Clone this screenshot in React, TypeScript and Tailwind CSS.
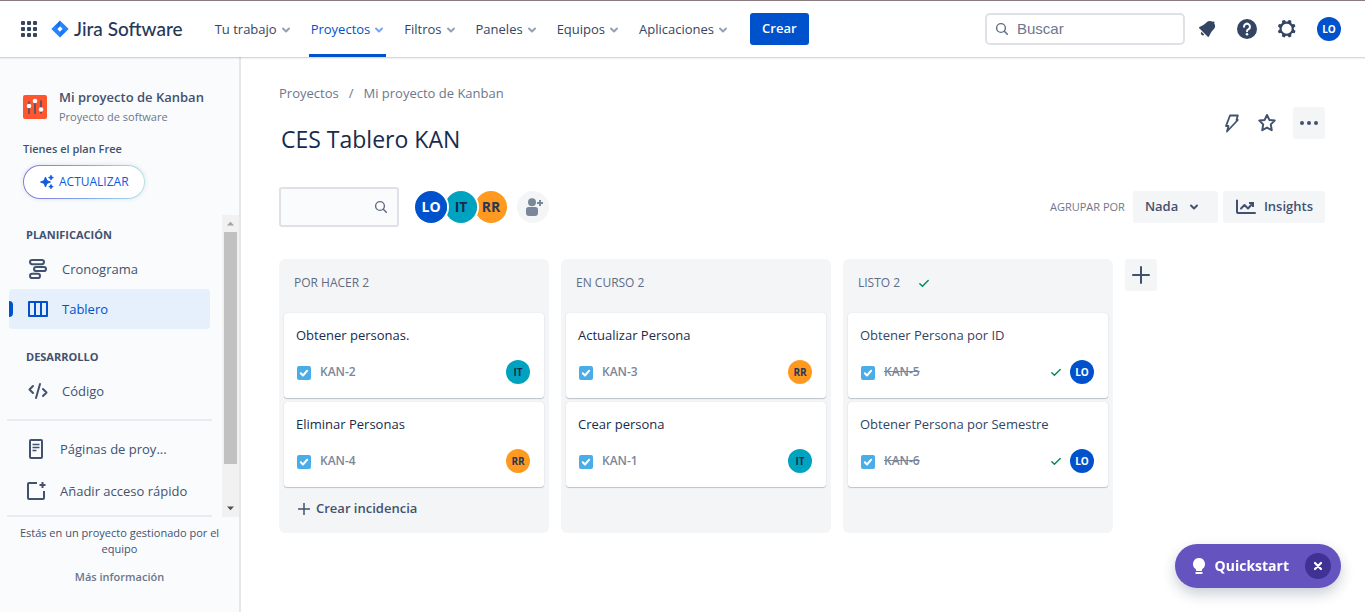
import React from "react";

type IconProps = { className?: string; children: React.ReactNode; viewBox?: string };

function Icon({ className = "size-6", children, viewBox = "0 0 24 24" }: IconProps) {
  return (
    <svg viewBox={viewBox} className={`shrink-0 ${className}`} fill="none" aria-hidden="true">
      {children}
    </svg>
  );
}

function Chevron({ className }: { className: string }) {
  return (
    <Icon viewBox="0 0 10 10" className={`size-[10px] ${className}`}>
      <path d="M2 3.5 5 6.5 8 3.5" stroke="currentColor" strokeWidth="2" strokeLinecap="round" strokeLinejoin="round" />
    </Icon>
  );
}

function SearchIcon() {
  return (
    <Icon viewBox="0 0 14 14" className="size-[14px]">
      <circle cx="6" cy="6" r="4.4" stroke="currentColor" strokeWidth="1.4" />
      <path d="m9.3 9.3 3 3" stroke="currentColor" strokeWidth="1.5" strokeLinecap="round" />
    </Icon>
  );
}

function DoneCheck() {
  return (
    <Icon viewBox="0 0 12 12" className="size-3 text-[#00875a]">
      <path d="M1.8 6.8 4.4 9.2 10.2 3.4" stroke="currentColor" strokeWidth="1.4" strokeLinecap="round" strokeLinejoin="round" />
    </Icon>
  );
}

type Person = "LO" | "IT" | "RR";

const personColors: Record<Person, string> = {
  LO: "bg-[#0052cc] text-white",
  IT: "bg-[#00a3bf] text-[#172b4d]",
  RR: "bg-[#ff991f] text-[#253858]",
};

function Avatar({ who, size }: { who: Person; size: "small" | "large" }) {
  const dims = size === "small" ? "size-6 text-[10px]" : "size-8 text-sm";
  return (
    <span className={`flex shrink-0 items-center justify-center rounded-full font-bold ${dims} ${personColors[who]}`}>
      {who}
    </span>
  );
}

const menus = ["Tu trabajo", "Proyectos", "Filtros", "Paneles", "Equipos", "Aplicaciones"];

function TopBar() {
  return (
    <header className="relative z-10 flex h-[57px] items-center border-t border-[#8b7a80] bg-white pr-6 pl-[21px] text-[#344563] shadow-[0_1px_1px_rgba(9,30,66,0.13),0_2px_1px_rgba(9,30,66,0.04)]">
      <button aria-label="Cambiar de aplicación" className="shrink-0">
        <Icon viewBox="0 0 16 16" className="size-4">
          {[0, 6, 12].map((y) =>
            [0, 6, 12].map((x) => <rect key={`${x}-${y}`} x={x} y={y} width="4" height="4" rx="1" fill="currentColor" />)
          )}
        </Icon>
      </button>
      <a href="#" className="ml-[14px] flex shrink-0 items-center gap-[5px]">
        <Icon viewBox="0 0 18 18" className="size-[18px]">
          <defs>
            <linearGradient id="jira-top" x1="9" y1="5" x2="5" y2="9" gradientUnits="userSpaceOnUse">
              <stop offset="0" stopColor="#0052cc" />
              <stop offset="1" stopColor="#2684ff" />
            </linearGradient>
          </defs>
          <path fillRule="evenodd" d="M9 .4 17.2 8.5q.6.5 0 1L9 17.6.8 9.5q-.6-.5 0-1ZM9 6.3 6.3 9 9 11.7 11.7 9Z" fill="#2684ff" />
          <path d="M9 .4v5.9L6.3 9 3.6 6.1Q6.500 4.500 9 .4Z" fill="url(#jira-top)" opacity=".55" />
          <path d="M9 17.600v-5.900L11.700 9l2.700 2.900Q11.500 13.500 9 17.600Z" fill="#0065e5" opacity=".35" />
        </Icon>
        <span className="font-['Lato',sans-serif] text-[19px] leading-6 font-medium whitespace-nowrap text-[#253858]">Jira Software</span>
      </a>
      <nav className="ml-[30px] flex h-full items-center gap-4">
        {menus.map((label) => {
          const active = label === "Proyectos";
          return (
            <button
              key={label}
              className={`flex h-full items-center gap-1 border-y-[3px] border-t-transparent px-0.5 pt-px font-medium whitespace-nowrap ${
                active ? "border-b-[#0052cc] text-[#0052cc]" : "border-b-transparent"
              }`}
            >
              {label}
              <Chevron className={active ? "text-[#7aa5e6]" : "text-[#97a0af]"} />
            </button>
          );
        })}
      </nav>
      <button className="ml-5 h-8 rounded-[3px] bg-[#0052cc] px-3 font-semibold text-white">Crear</button>
      <div className="ml-auto flex items-center">
        <label className="flex h-8 w-[200px] items-center gap-2 rounded-[5px] border-2 border-[#dfe1e6] px-2 text-[#5e6c84]">
          <SearchIcon />
          <input
            type="search"
            aria-label="Buscar"
            placeholder="Buscar"
            className="w-full min-w-0 bg-transparent font-['Liberation_Sans',sans-serif] text-[15px] outline-none placeholder:text-[#6b778c]"
          />
        </label>
        <button aria-label="Notificaciones" className="ml-[10px]">
          <Icon>
            <path
              fill="currentColor"
              d="M6.485 17.669a2 2 0 002.829 0l-2.829-2.83a2 2 0 000 2.83zm4.897-12.191l-.725.725c-.782.782-2.21 1.813-3.206 2.311l-3.017 1.509c-.495.248-.584.774-.187 1.171l8.556 8.556c.398.396.922.313 1.171-.188l1.51-3.016c.494-.988 1.526-2.42 2.311-3.206l.725-.726a5.048 5.048 0 00.64-6.356 1.01 1.01 0 10-1.354-1.494c-.023.025-.046.049-.066.075a5.043 5.043 0 00-2.788-.84 5.036 5.036 0 00-3.57 1.478z"
            />
          </Icon>
        </button>
        <button aria-label="Ayuda" className="ml-4">
          <Icon>
            <circle cx="12" cy="12" r="10" fill="currentColor" />
            <path d="M9 9.700a3 3 0 1 1 4.600 2.500c-1 .6-1.600 1-1.600 2" stroke="white" strokeWidth="2" strokeLinecap="round" />
            <circle cx="12" cy="17.200" r="1.300" fill="white" />
          </Icon>
        </button>
        <button aria-label="Configuración" className="ml-4">
          <Icon>
            <path
              fill="currentColor"
              d="M11.701 16.7a5.002 5.002 0 110-10.003 5.002 5.002 0 010 10.004m8.368-3.117a1.995 1.995 0 01-1.346-1.885c0-.876.563-1.613 1.345-1.885a.48.48 0 00.315-.574 8.947 8.947 0 00-.836-1.993.477.477 0 00-.598-.195 2.04 2.04 0 01-1.29.08 1.988 1.988 0 01-1.404-1.395 2.04 2.04 0 01.076-1.297.478.478 0 00-.196-.597 8.98 8.98 0 00-1.975-.826.479.479 0 00-.574.314 1.995 1.995 0 01-1.885 1.346 1.994 1.994 0 01-1.884-1.345.482.482 0 00-.575-.315c-.708.2-1.379.485-2.004.842a.47.47 0 00-.198.582A2.002 2.002 0 014.445 7.06a.478.478 0 00-.595.196 8.946 8.946 0 00-.833 1.994.48.48 0 00.308.572 1.995 1.995 0 011.323 1.877c0 .867-.552 1.599-1.324 1.877a.479.479 0 00-.308.57 8.99 8.99 0 00.723 1.79.477.477 0 00.624.194c.595-.273 1.343-.264 2.104.238.117.077.225.185.302.3.527.8.512 1.58.198 2.188a.473.473 0 00.168.628 8.946 8.946 0 002.11.897.474.474 0 00.57-.313 1.995 1.995 0 011.886-1.353c.878 0 1.618.567 1.887 1.353a.475.475 0 00.57.313 8.964 8.964 0 002.084-.883.473.473 0 00.167-.631c-.318-.608-.337-1.393.191-2.195.077-.116.185-.225.302-.302.772-.511 1.527-.513 2.125-.23a.477.477 0 00.628-.19 8.925 8.925 0 00.728-1.793.478.478 0 00-.314-.573"
            />
          </Icon>
        </button>
        <button aria-label="Tu perfil" className="ml-[18px]">
          <Avatar who="LO" size="small" />
        </button>
      </div>
    </header>
  );
}

function SideLink({ label, icon, active = false }: { label: string; icon: React.ReactNode; active?: boolean }) {
  return (
    <a
      href="#"
      className={`relative flex h-10 items-center gap-3 rounded pl-[17px] ${active ? "bg-[#e6effc] text-[#0052cc]" : "text-[#42526e]"}`}
    >
      {active && <span className="absolute top-3 left-0 h-4 w-1 rounded-r-sm bg-[#0052cc]" />}
      {icon}
      <span className="pt-0.5 whitespace-nowrap">{label}</span>
    </a>
  );
}

function Sidebar() {
  return (
    <aside className="flex w-[241px] shrink-0 flex-col border-r-2 border-[#e6e7ea] bg-[#fafbfd] text-[#42526e]">
      <div className="px-[23px] pt-[30px]">
        <div className="flex items-center gap-3">
          <Icon className="size-6">
            <rect width="24" height="24" rx="2" fill="#ff5630" />
            <path d="M6 7v11.500M12 5v13.500M18 6v12" stroke="#42526e" strokeWidth="1.600" strokeLinecap="round" />
            <circle cx="6" cy="11" r="2.300" fill="white" />
            <circle cx="12" cy="6" r="2.300" fill="white" />
            <circle cx="18" cy="14.500" r="2.300" fill="white" />
          </Icon>
          <div className="whitespace-nowrap">
            <h2 className="leading-5 font-semibold">Mi proyecto de Kanban</h2>
            <p className="text-[11px] leading-5 text-[#6b778c]">Proyecto de software</p>
          </div>
        </div>
        <p className="mt-3 text-[11px] leading-5 font-semibold">Tienes el plan Free</p>
        <button className="mt-[6px] rounded-full bg-linear-to-r from-[#8777d9] via-[#7fa6ee] to-[#b3e3e4] p-px shadow-[0_0_5px_rgba(9,30,66,0.12)]">
          <span className="flex h-8 items-center gap-1 rounded-full bg-white px-[15px] text-xs font-medium text-[#0c5be0]">
            <Icon viewBox="0 0 16 16" className="size-4">
              <path
                d="M6.500 3 7.900 6.600 11.500 8 7.900 9.400 6.500 13 5.100 9.400 1.500 8 5.100 6.600ZM12 1.200l.7 1.700 1.700.7-1.700.7-.7 1.700-.7-1.700-1.700-.7 1.700-.7ZM12 10.500l.6 1.500 1.600.6-1.600.7-.6 1.500-.6-1.500-1.600-.7 1.600-.6Z"
                fill="currentColor"
                stroke="currentColor"
                strokeWidth=".9"
                strokeLinejoin="round"
              />
            </Icon>
            ACTUALIZAR
          </span>
        </button>
      </div>
      <div className="mt-4 flex">
        <div className="min-w-0 flex-1 pr-[10px] pl-[7px]">
          <nav className="border-b-2 border-[#e9ebee] pb-1">
            <div className="-mr-0.5 pr-1 pl-0.5">
              <h3 className="pt-[10px] pb-1 pl-[17px] text-[11px] leading-5 font-bold">PLANIFICACIÓN</h3>
              <SideLink
                label="Cronograma"
                icon={
                  <Icon>
                    <rect x="4" y="3" width="14" height="4.200" rx="2.100" stroke="currentColor" strokeWidth="2" />
                    <rect x="8" y="9.900" width="12" height="4.200" rx="2.100" stroke="currentColor" strokeWidth="2" />
                    <rect x="4" y="16.800" width="10" height="4.200" rx="2.100" stroke="currentColor" strokeWidth="2" />
                  </Icon>
                }
              />
              <SideLink
                active
                label="Tablero"
                icon={
                  <Icon>
                    <path d="M3 5h18v14H3ZM9 5v14M15 5v14" stroke="currentColor" strokeWidth="2" strokeLinejoin="round" />
                  </Icon>
                }
              />
              <h3 className="pt-[18px] pb-1 pl-[17px] text-[11px] leading-5 font-bold">DESARROLLO</h3>
              <SideLink
                label="Código"
                icon={
                  <Icon>
                    <path
                      d="m7 7-3.500 3.500L7 14M17 10l3.500 3.500L17 17M14 5l-4 14"
                      stroke="currentColor"
                      strokeWidth="2"
                      strokeLinecap="round"
                      strokeLinejoin="round"
                    />
                  </Icon>
                }
              />
            </div>
            <hr className="my-2 border-t-2 border-[#e9ebee]" />
            <div className="flex flex-col gap-[2px]">
              <SideLink
                label="Páginas de proy..."
                icon={
                  <Icon>
                    <rect x="6" y="3" width="12" height="18" rx="1" stroke="currentColor" strokeWidth="2" />
                    <path d="M8.500 7.500h7M8.500 10.500h7M8.500 13.500h4" stroke="currentColor" strokeWidth="1.600" />
                  </Icon>
                }
              />
              <SideLink
                label="Añadir acceso rápido"
                icon={
                  <Icon>
                    <path d="M13 4H5a1 1 0 0 0-1 1v14a1 1 0 0 0 1 1h14a1 1 0 0 0 1-1v-7" stroke="currentColor" strokeWidth="2" />
                    <path d="M18.500 3v6M15.500 6h6" stroke="currentColor" strokeWidth="2" />
                  </Icon>
                }
              />
            </div>
          </nav>
        </div>
        <div className="flex w-[17px] shrink-0 flex-col items-center justify-between bg-[#f1f1f1]" aria-hidden="true">
          <Icon viewBox="0 0 17 17" className="size-[17px]">
            <path d="M5 10.500h7l-3.500-3.700Z" fill="#a3a3a3" />
          </Icon>
          <span className="w-[13px] flex-1 bg-[#c1c1c1]" />
          <Icon viewBox="0 0 17 17" className="mt-9 size-[17px]">
            <path d="M5 6.500h7l-3.500 3.700Z" fill="#505050" />
          </Icon>
        </div>
      </div>
      <footer className="px-2 pt-2 pb-4 text-center text-[11px] leading-4">
        <p>Estás en un proyecto gestionado por el equipo</p>
        <a href="#" className="mt-3 inline-block font-semibold text-[#6b778c]">Más información</a>
      </footer>
    </aside>
  );
}

type Issue = { title: string; id: string; who: Person };

const columns: { name: string; done?: boolean; create?: boolean; issues: Issue[] }[] = [
  {
    name: "POR HACER",
    create: true,
    issues: [
      { title: "Obtener personas.", id: "KAN-2", who: "IT" },
      { title: "Eliminar Personas", id: "KAN-4", who: "RR" },
    ],
  },
  {
    name: "EN CURSO",
    issues: [
      { title: "Actualizar Persona", id: "KAN-3", who: "RR" },
      { title: "Crear persona", id: "KAN-1", who: "IT" },
    ],
  },
  {
    name: "LISTO",
    done: true,
    issues: [
      { title: "Obtener Persona por ID", id: "KAN-5", who: "LO" },
      { title: "Obtener Persona por Semestre", id: "KAN-6", who: "LO" },
    ],
  },
];

function IssueCard({ issue, done }: { issue: Issue; done?: boolean }) {
  return (
    <article className="rounded-[3px] bg-white px-3 pt-3 pb-[14px] shadow-[0_1px_1px_rgba(9,30,66,0.22),0_0_1px_rgba(9,30,66,0.2)]">
      <h4 className={`leading-5 ${done ? "text-[#344563]" : "text-[#172b4d]"}`}>{issue.title}</h4>
      <div className="mt-[15px] flex items-center gap-2">
        <Icon viewBox="0 0 16 16" className="size-4">
          <rect x="1" y="2" width="14" height="14" rx="2" fill="#4bade8" />
          <path d="m4.800 9.300 2.200 2.200 4.200-4.800" stroke="white" strokeWidth="2" strokeLinecap="round" strokeLinejoin="round" />
        </Icon>
        <a href="#" className={`text-xs leading-6 font-semibold text-[#7a869a] ${done ? "line-through" : ""}`}>
          {issue.id}
        </a>
        <div className="ml-auto mr-0.5 flex items-center gap-2">
          {done && <DoneCheck />}
          <Avatar who={issue.who} size="small" />
        </div>
      </div>
    </article>
  );
}

function Board() {
  return (
    <div className="mt-8 flex items-start gap-3">
      <div className="flex items-stretch gap-3">
        {columns.map((col) => (
          <section key={col.name} className="flex w-[270px] flex-col rounded-md bg-[#f4f5f7] px-[5px]">
            <h3 className="flex h-[54px] items-center gap-[18px] px-[10px] pb-[6px] text-xs font-medium text-[#5e6c84]">
              {col.name} {col.issues.length}
              {col.done && <DoneCheck />}
            </h3>
            <div className="flex flex-col gap-1">
              {col.issues.map((issue) => (
                <IssueCard key={issue.id} issue={issue} done={col.done} />
              ))}
            </div>
            {col.create && (
              <button className="mt-1 mb-[6px] flex h-9 items-center gap-[6px] px-[14px] font-semibold text-[#42526e]">
                <Icon viewBox="0 0 12 12" className="size-3">
                  <path d="M6 0v12M0 6h12" stroke="currentColor" strokeWidth="1.500" />
                </Icon>
                Crear incidencia
              </button>
            )}
          </section>
        ))}
      </div>
      <button aria-label="Crear columna" className="flex size-8 items-center justify-center rounded-[3px] bg-[#f4f5f7] text-[#42526e]">
        <Icon viewBox="0 0 18 18" className="size-[18px]">
          <path d="M9 1v16M1 9h16" stroke="currentColor" strokeWidth="2" strokeLinecap="round" />
        </Icon>
      </button>
    </div>
  );
}

function Toolbar() {
  return (
    <div className="mt-8 flex items-center">
      <label className="flex h-10 w-[120px] items-center rounded-[3px] border-2 border-[#dfe1e6] bg-[#fafbfc] px-[9px] text-[#5e6c84]">
        <input type="search" aria-label="Buscar en el tablero" className="w-full min-w-0 bg-transparent outline-none" />
        <SearchIcon />
      </label>
      <div className="ml-[14px] flex -space-x-[6px]">
        {(["LO", "IT", "RR"] as Person[]).map((who, i) => (
          <button
            key={who}
            aria-label={`Filtrar por ${who}`}
            className={`relative rounded-full border-2 border-white ${["z-[3]", "z-[2]", "z-[1]"][i]}`}
          >
            <Avatar who={who} size="large" />
          </button>
        ))}
      </div>
      <button aria-label="Añadir personas" className="ml-2 flex size-8 items-center justify-center rounded-full bg-[#f4f5f7] text-[#7a869a]">
        <Icon className="size-6">
          <circle cx="11" cy="7.200" r="4" fill="currentColor" />
          <path d="M5 14.500a2.500 2.500 0 0 1 2.500-2.500h7a2.500 2.500 0 0 1 2.500 2.500v3.500a3 3 0 0 1-3 3H8a3 3 0 0 1-3-3Z" fill="currentColor" />
          <path d="M19 5v6M16 8h6" stroke="currentColor" strokeWidth="2" />
        </Icon>
      </button>
      <label htmlFor="group-by" className="ml-auto text-[11px] text-[#6b778c]">AGRUPAR POR</label>
      <div className="ml-2 grid items-center rounded-[3px] bg-[#f4f5f7] text-[#42526e]">
        <select id="group-by" className="col-start-1 row-start-1 h-8 w-[85px] appearance-none bg-transparent pl-3 font-semibold outline-none">
          <option>Nada</option>
        </select>
        <Chevron className="pointer-events-none col-start-1 row-start-1 mr-[19px] justify-self-end" />
      </div>
      <button className="ml-[5px] flex h-8 items-center gap-[7px] rounded-[3px] bg-[#f4f5f7] px-3 font-semibold text-[#42526e]">
        <Icon viewBox="0 0 22 16" className="h-4 w-[22px]">
          <path d="M2 1.500V13a1 1 0 0 0 1 1h17" stroke="currentColor" strokeWidth="2" strokeLinecap="round" />
          <path d="m6 9.500 3.500-3.500 3.500 3.500L17.500 4.500" stroke="currentColor" strokeWidth="2" strokeLinecap="round" strokeLinejoin="round" />
          <path d="M14 4h4v4" stroke="currentColor" strokeWidth="2" />
        </Icon>
        Insights
      </button>
    </div>
  );
}

export default function App() {
  return (
    <div className="flex min-h-screen flex-col bg-white font-['Open_Sans','Noto_Sans',sans-serif] text-[13px]">
      <TopBar />
      <div className="flex flex-1">
        <Sidebar />
        <main className="min-w-0 flex-1 pt-[26px] pr-10 pb-16 pl-[38px]">
          <nav aria-label="Ruta" className="flex gap-[10px] leading-5 text-[#6b778c]">
            <a href="#">Proyectos</a>
            <span>/</span>
            <a href="#">Mi proyecto de Kanban</a>
          </nav>
          <div className="mt-1 flex items-start justify-between">
            <h1 className="mt-4 pl-0.5 text-[23px] leading-8 font-medium text-[#172b4d]">CES Tablero KAN</h1>
            <div className="flex items-center text-[#42526e]">
              <button aria-label="Automatización">
                <Icon>
                  <path
                    d="M11 4.500H18.800L17.500 9H18.800L8 20.500 9.500 15H7Z"
                    stroke="currentColor"
                    strokeWidth="1.800"
                    strokeLinejoin="round"
                  />
                </Icon>
              </button>
              <button aria-label="Añadir a favoritos" className="ml-3">
                <Icon>
                  <path
                    d="m12 4 2.350 4.900 5.350.7-3.900 3.750.95 5.850L12 16.600 7.250 19.200l.95-5.850L4.300 9.600l5.350-.7Z"
                    stroke="currentColor"
                    strokeWidth="2"
                    strokeLinejoin="round"
                  />
                </Icon>
              </button>
              <button aria-label="Más acciones" className="ml-[14px] flex size-8 items-center justify-center rounded-[3px] bg-[#f4f5f7]">
                <Icon>
                  {[5, 12, 19].map((x) => (
                    <circle key={x} cx={x} cy="12" r="2" fill="currentColor" />
                  ))}
                </Icon>
              </button>
            </div>
          </div>
          <Toolbar />
          <Board />
        </main>
      </div>
      <div className="fixed right-6 bottom-6 z-20 flex h-11 items-center rounded-full bg-[#6554c0] pr-[10px] pl-[14px] text-white shadow-[0_6px_14px_rgba(9,30,66,0.22)]">
        <button className="flex items-center gap-[6px] text-sm font-bold">
          <Icon viewBox="0 0 20 20" className="size-5">
            <path d="M10 2a6 6 0 0 0-3.300 11l.6 2h5.400l.6-2A6 6 0 0 0 10 2Z" fill="currentColor" />
            <path d="M7.300 17h5.400" stroke="currentColor" strokeWidth="2" strokeLinecap="round" />
          </Icon>
          Quickstart
        </button>
        <button aria-label="Cerrar" className="ml-4 flex size-[26px] items-center justify-center rounded-full bg-[#403294]">
          <Icon viewBox="0 0 10 10" className="size-[10px]">
            <path d="m2 2 6 6M8 2 2 8" stroke="currentColor" strokeWidth="2.200" strokeLinecap="round" />
          </Icon>
        </button>
      </div>
    </div>
  );
}
